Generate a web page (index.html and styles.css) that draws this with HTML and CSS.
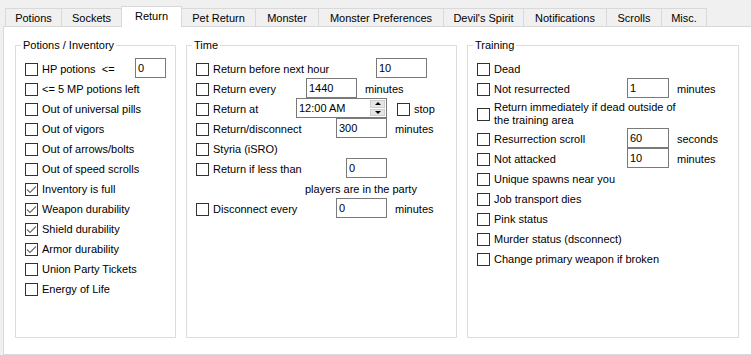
FILE: index.html
```html
<!DOCTYPE html>
<html lang="en">
<head>
    <meta charset="UTF-8">
    <title>Return settings</title>
    <link rel="stylesheet" href="styles.css">
</head>
<body>
<div class="window">

    <!-- Tab strip -->
    <div class="tabs">
        <div class="tab">Potions</div>
        <div class="tab">Sockets</div>
        <div class="tab active">Return</div>
        <div class="tab">Pet Return</div>
        <div class="tab">Monster</div>
        <div class="tab">Monster Preferences</div>
        <div class="tab">Devil's Spirit</div>
        <div class="tab">Notifications</div>
        <div class="tab">Scrolls</div>
        <div class="tab">Misc.</div>
    </div>

    <div class="panel">

        <!-- Potions / Inventory -->
        <fieldset class="group">
            <legend>Potions / Inventory</legend>
            <div class="rows">
                <div class="row"><span class="opt lead-110"><span class="box"></span>HP potions&nbsp;&nbsp;&lt;=</span><input class="field w31" value="0"></div>
                <div class="row"><span class="opt"><span class="box"></span>&lt;= 5 MP potions left</span></div>
                <div class="row"><span class="opt"><span class="box"></span>Out of universal pills</span></div>
                <div class="row"><span class="opt"><span class="box"></span>Out of vigors</span></div>
                <div class="row"><span class="opt"><span class="box"></span>Out of arrows/bolts</span></div>
                <div class="row"><span class="opt"><span class="box"></span>Out of speed scrolls</span></div>
                <div class="row"><span class="opt"><span class="box"><svg viewBox="0 0 11 11"><path d="M1 5.5 L4 8.5 L10 2.5"/></svg></span>Inventory is full</span></div>
                <div class="row"><span class="opt"><span class="box"><svg viewBox="0 0 11 11"><path d="M1 5.5 L4 8.5 L10 2.5"/></svg></span>Weapon durability</span></div>
                <div class="row"><span class="opt"><span class="box"><svg viewBox="0 0 11 11"><path d="M1 5.5 L4 8.5 L10 2.5"/></svg></span>Shield durability</span></div>
                <div class="row"><span class="opt"><span class="box"><svg viewBox="0 0 11 11"><path d="M1 5.5 L4 8.5 L10 2.5"/></svg></span>Armor durability</span></div>
                <div class="row"><span class="opt"><span class="box"></span>Union Party Tickets</span></div>
                <div class="row"><span class="opt"><span class="box"></span>Energy of Life</span></div>
            </div>
        </fieldset>

        <!-- Time -->
        <fieldset class="group">
            <legend>Time</legend>
            <div class="rows">
                <div class="row"><span class="opt lead-180"><span class="box"></span>Return before next hour</span><input class="field w51" value="10"></div>
                <div class="row"><span class="opt lead-110"><span class="box"></span>Return every</span><input class="field w51" value="1440"><span class="unit">minutes</span></div>
                <div class="row">
                    <span class="opt lead-100"><span class="box"></span>Return at</span>
                    <div class="timebox">
                        <span>12:00 AM</span>
                        <span class="spin"><span class="up"></span><span class="down"></span></span>
                    </div>
                    <span class="opt stop"><span class="box"></span>stop</span>
                </div>
                <div class="row"><span class="opt lead-140"><span class="box"></span>Return/disconnect</span><input class="field w51" value="300"><span class="unit">minutes</span></div>
                <div class="row"><span class="opt"><span class="box"></span>Styria (iSRO)</span></div>
                <div class="row"><span class="opt lead-150"><span class="box"></span>Return if less than</span><input class="field w41" value="0"></div>
                <div class="row note">players are in the party</div>
                <div class="row"><span class="opt lead-140"><span class="box"></span>Disconnect every</span><input class="field w51" value="0"><span class="unit">minutes</span></div>
            </div>
        </fieldset>

        <!-- Training -->
        <fieldset class="group">
            <legend>Training</legend>
            <div class="rows">
                <div class="row"><span class="opt"><span class="box"></span>Dead</span></div>
                <div class="row"><span class="opt lead-150"><span class="box"></span>Not resurrected</span><input class="field w42" value="1"><span class="unit">minutes</span></div>
                <div class="row tall"><span class="opt"><span class="box"></span><span class="wrap">Return immediately if dead outside of<br>the training area</span></span></div>
                <div class="row"><span class="opt lead-150"><span class="box"></span>Resurrection scroll</span><input class="field w42" value="60"><span class="unit">seconds</span></div>
                <div class="row"><span class="opt lead-150"><span class="box"></span>Not attacked</span><input class="field w42" value="10"><span class="unit">minutes</span></div>
                <div class="row"><span class="opt"><span class="box"></span>Unique spawns near you</span></div>
                <div class="row"><span class="opt"><span class="box"></span>Job transport dies</span></div>
                <div class="row"><span class="opt"><span class="box"></span>Pink status</span></div>
                <div class="row"><span class="opt"><span class="box"></span>Murder status (dsconnect)</span></div>
                <div class="row"><span class="opt"><span class="box"></span>Change primary weapon if broken</span></div>
            </div>
        </fieldset>

    </div>
</div>
</body>
</html>
```

FILE: styles.css
```css
* { margin: 0; padding: 0; box-sizing: border-box; }
html, body {
    height: 100%;
    overflow: hidden;
}
body {
    background: #f0f0f0;
    font-family: "Liberation Sans", Arial, sans-serif;
    font-size: 11px;
    color: #000;
}
.window {
    display: flex;
    flex-direction: column;
    height: 355px;
    padding-left: 3px;
}

/* Tabs */
.tabs {
    display: grid;
    grid-template-columns: 56px 60px 61px 73px 63px 125px 80px 83px 55px 46px;
    align-items: end;
    height: 26px;
    margin-left: 2px;
    position: relative;
    z-index: 1;
}
.tab {
    height: 18px;
    background: #f0f0f0;
    border: 1px solid #d9d9d9;
    border-width: 1px 0 0 1px;
    display: flex;
    align-items: center;
    justify-content: center;
    padding-top: 1px;
    white-space: nowrap;
}
.tab:last-child { border-right-width: 1px; }
.tab.active {
    height: 21px;
    margin-bottom: -1px;
    background: #fff;
    border-right-width: 1px;
    padding-top: 0;
    padding-bottom: 3px;
}
.tab.active + .tab { border-left-width: 0; }

/* Panel */
.panel {
    flex: 1;
    background: #fff;
    border: 1px solid #d9d9d9;
    margin-right: -2px;
    padding: 12px 0 0 11px;
    display: grid;
    grid-template-columns: 161px 271px 272px;
    column-gap: 10px;
    align-items: start;
}
.group {
    border: 1px solid #dcdcdc;
    height: 299px;
    min-width: 0;
}
legend {
    margin-left: 5px;
    padding: 0 2px;
    line-height: 13px;
}
.rows { padding: 7px 0 0 9px; }
.row {
    display: flex;
    align-items: center;
    height: 20px;
    white-space: nowrap;
}
.row.tall { height: 30px; }
.row.note { padding-left: 109px; }

/* Checkbox + label */
.opt {
    display: flex;
    align-items: center;
}
.box {
    width: 13px;
    height: 13px;
    border: 1px solid #333;
    background: #fff;
    margin-right: 4px;
    flex: none;
    display: flex;
}
.box svg {
    width: 11px;
    height: 11px;
}
.box path {
    fill: none;
    stroke: #6a6a6a;
    stroke-width: 1.1;
}
.wrap { line-height: 13px; }
.lead-100 { width: 100px; }
.lead-110 { width: 110px; }
.lead-140 { width: 140px; }
.lead-150 { width: 150px; }
.lead-180 { width: 180px; }
.stop { margin-left: 10px; }

/* Text fields */
.field {
    height: 20px;
    margin-top: -2px;
    border: 1px solid #7a7a7a;
    padding: 0 2px;
    font: inherit;
    color: #000;
    background: #fff;
    outline: none;
}
.w31 { width: 31px; }
.w41 { width: 41px; }
.w42 { width: 42px; }
.w51 { width: 51px; }
.unit { margin-left: 8px; }

/* Time picker */
.timebox {
    width: 91px;
    height: 20px;
    margin-top: -2px;
    border: 1px solid #7a7a7a;
    padding: 0 1px 0 2px;
    display: flex;
    align-items: center;
    justify-content: space-between;
}
.spin {
    width: 15px;
    height: 16px;
    display: flex;
    flex-direction: column;
    gap: 1px;
}
.spin span {
    flex: 1;
    background: #e5e5e5;
    border: 1px solid #cfcfcf;
    display: flex;
    align-items: center;
    justify-content: center;
}
.spin .up::before {
    content: "";
    border: 3px solid transparent;
    border-bottom: 3px solid #000;
    border-top-width: 0;
}
.spin .down::before {
    content: "";
    border: 3px solid transparent;
    border-top: 3px solid #000;
    border-bottom-width: 0;
}
```
